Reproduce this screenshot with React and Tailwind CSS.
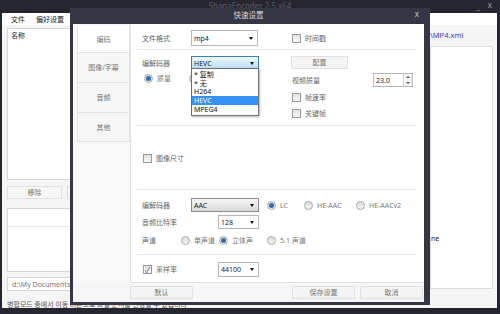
import React from 'react';

const FONT = "font-['Noto_Sans','Noto_Sans_CJK_SC',sans-serif]";

const Arrow = () => (
    <span className="w-0 h-0 border-x-[2.5px] border-x-transparent border-t-[3px] border-t-[#111]" />
);

const Select = ({ value, w, variant = 'plain' }) => {
    const look = {
        plain: 'border-[#b4b6bc] bg-white',
        focus: 'border-[#3c7fb1] bg-gradient-to-b from-[#eef7fd] to-[#b9dcf3]',
        gray: 'border-[#8c8c8c] bg-gradient-to-b from-[#f6f6f6] to-[#dadada]',
    }[variant];
    return (
        <div className={`flex items-center justify-between border ${look} ${w} h-full pl-[2px] pr-[4px] text-[#222]`}>
            <span>{value}</span>
            <Arrow />
        </div>
    );
};

const Check = ({ checked, label, className = '' }) => (
    <div className={`flex items-center gap-[4px] ${className}`}>
        <span className="w-[9px] h-[9px] border border-[#9a9a9a] bg-gradient-to-b from-[#e2e2e2] to-[#f7f7f7] flex items-center justify-center text-[8px] leading-none text-[#2a5fa8]">
            {checked ? '✓' : ''}
        </span>
        <span className="text-[#666]">{label}</span>
    </div>
);

const Radio = ({ checked, label, className = '' }) => (
    <div className={`flex items-center gap-[4px] ${className}`}>
        <span className="w-[9px] h-[9px] rounded-full border border-[#a8a8a8] bg-gradient-to-b from-[#dedede] to-[#f4f4f4] flex items-center justify-center">
            {checked && <span className="w-[5px] h-[5px] rounded-full bg-[#2d6db3]" />}
        </span>
        {label && <span className="text-[#777]">{label}</span>}
    </div>
);

const Sep = ({ className = '' }) => <div className={`h-px bg-[#e6e6e6] ${className}`} />;

const Btn = ({ label, className = '' }) => (
    <div className={`w-[63px] h-full border border-[#e0e0e0] bg-[#f4f4f4] flex items-center justify-center text-[#777] ${className}`}>
        {label}
    </div>
);

const Tab = ({ label, h, active }) => (
    <div className={`${h} flex items-center justify-center border-b border-[#e2e2e2] ${active ? 'bg-white' : 'bg-[#f6f6f6]'} text-[#777]`}>
        {label}
    </div>
);

const Dialog = () => (
    <div className="absolute left-[70px] top-[8px] w-[360px] h-[297px] bg-[#363744] flex flex-col pl-[3px] pr-[6px] pb-[3px]">
        <div className="h-[16px] flex items-center justify-center relative text-[#d8d8de] text-[7.5px]">
            <span>快速设置</span>
            <span className="absolute right-[5px] top-[2px] text-[#c8c8d0] text-[8px]">x</span>
        </div>
        <div className="flex-1 bg-[#f6f6f6] flex flex-col">
            <div className="flex h-[259px]">
                <div className="w-[57px] pl-[4px] pt-[2px] bg-[#f8f8f8]">
                    <div className="flex flex-col border-x border-[#e4e4e4]">
                        <Tab label="编码" h="h-[27px]" active />
                        <Tab label="图像/字幕" h="h-[30px]" />
                        <Tab label="音频" h="h-[30px]" />
                        <Tab label="其他" h="h-[29px]" />
                    </div>
                </div>
                <div className="flex-1 bg-white border-l border-b border-[#e0e0e0] pl-[6px] pr-[8px] pt-[6px] flex flex-col">
                    <div className="h-[16px] flex items-center">
                        <span className="w-[54px] pl-[5px] text-[#666]">文件格式</span>
                        <Select value="mp4" w="w-[67px]" />
                        <Check label="时间戳" className="ml-[34px]" />
                    </div>
                    <Sep className="mt-[3px]" />
                    <div className="mt-[6px] flex h-[63px]">
                        <div className="w-[154px] flex flex-col">
                            <div className="h-[14px] flex items-center relative">
                                <span className="w-[54px] pl-[5px] text-[#666]">编解码器</span>
                                <Select value="HEVC" w="w-[68px]" variant="focus" />
                                <div className="absolute left-[54px] top-[12px] w-[68px] h-[48px] bg-white border border-[#6f6f6f] shadow-[1px_1px_2px_rgba(0,0,0,0.3)] z-10 flex flex-col py-[1px] text-[#111] leading-none">
                                    <span className="h-[9px] flex items-center pl-[2px]">* 复制</span>
                                    <span className="h-[9px] flex items-center pl-[2px]">* 无</span>
                                    <span className="h-[9px] flex items-center pl-[2px]">H264</span>
                                    <span className="h-[9px] flex items-center pl-[2px] bg-[#3592f0] text-white">HEVC</span>
                                    <span className="h-[9px] flex items-center pl-[2px]">MPEG4</span>
                                </div>
                            </div>
                            <div className="mt-[2px] h-[12px] flex items-center pl-[7px]">
                                <Radio checked label="质量" />
                                <Radio className="ml-[18px]" />
                            </div>
                        </div>
                        <div className="flex-1 flex flex-col">
                            <div className="h-[13px] w-[57px] border border-[#e0e0e0] bg-[#f4f4f4] flex items-center justify-center text-[#777]">配置</div>
                            <div className="mt-[4px] h-[14px] flex items-center">
                                <span className="w-[82px] pl-[1px] text-[#666]">视频质量</span>
                                <div className="w-[40px] h-full border border-[#b4b6bc] bg-white flex items-center justify-between pl-[2px] text-[#222]">
                                    <span>23.0</span>
                                    <div className="w-[9px] h-full border-l border-[#d0d0d0] flex flex-col items-center justify-around bg-[#f3f3f3]">
                                        <span className="w-0 h-0 border-x-[2px] border-x-transparent border-b-[2px] border-b-[#555]" />
                                        <span className="w-0 h-0 border-x-[2px] border-x-transparent border-t-[2px] border-t-[#555]" />
                                    </div>
                                </div>
                            </div>
                            <div className="h-[20px] flex items-center pl-[1px]">
                                <Check label="帧速率" />
                            </div>
                            <div className="h-[12px] flex items-center pl-[1px]">
                                <Check label="关键帧" />
                            </div>
                        </div>
                    </div>
                    <Sep className="mt-[6px]" />
                    <div className="mt-[26px] h-[12px] flex items-center pl-[6px]">
                        <Check label="图像尺寸" />
                    </div>
                    <Sep className="mt-[25px]" />
                    <div className="mt-[8px] h-[14px] flex items-center">
                        <span className="w-[54px] pl-[5px] text-[#666]">编解码器</span>
                        <Select value="AAC" w="w-[68px]" variant="gray" />
                        <Radio checked label="LC" className="ml-[8px] w-[37px]" />
                        <Radio label="HE-AAC" className="w-[52px]" />
                        <Radio label="HE-AACv2" />
                    </div>
                    <div className="mt-[3px] h-[14px] flex items-center">
                        <span className="w-[81px] pl-[5px] text-[#666]">音频比特率</span>
                        <Select value="128" w="w-[41px]" />
                    </div>
                    <div className="mt-[5px] h-[12px] flex items-center">
                        <span className="w-[44px] pl-[5px] text-[#666]">声道</span>
                        <Radio label="单声道" className="w-[38px]" />
                        <Radio checked label="立体声" className="w-[48px]" />
                        <Radio label="5.1 声道" />
                    </div>
                    <Sep className="mt-[8px]" />
                    <div className="mt-[7px] h-[15px] flex items-center">
                        <Check checked label="采样率" className="w-[81px] pl-[6px]" />
                        <Select value="44100" w="w-[41px]" />
                    </div>
                </div>
            </div>
            <div className="mt-[3px] h-[13px] flex pl-[57px] pr-[1px] gap-[5px]">
                <Btn label="默认" />
                <Btn label="保存设置" className="ml-auto" />
                <Btn label="取消" />
            </div>
        </div>
    </div>
);

export default function App() {
    return (
        <div className={`relative w-[500px] h-[314px] overflow-hidden bg-[#25262f] text-[7px] leading-none ${FONT}`}>
            <div className="h-[13px] relative flex justify-center pt-[2px] text-[8px] text-[#5a5b66]">
                <span>ShanaEncoder 2.5 x64</span>
                <span className="absolute right-[20px] top-[2px] text-[#8a8a94]">_</span>
                <span className="absolute right-[8px] top-[1px] text-[#a0a0a8]">x</span>
            </div>
            <div className="ml-[2px] mr-[3px] h-[295px] bg-[#f5f5f5] flex flex-col">
                <div className="h-[14px] bg-white flex items-center gap-[11px] pl-[9px] text-[#222]">
                    <span>文件</span>
                    <span>偏好设置</span>
                </div>
                <div className="flex-1 flex justify-between">
                    <div className="w-[120px] pl-[5px] pt-[3px] flex flex-col">
                        <div className="h-[152px] w-[115px] bg-white border border-[#d6d6d6]">
                            <div className="h-[13px] flex items-center pl-[3px] text-[#222]">名称</div>
                        </div>
                        <div className="mt-[6px] h-[13px] flex gap-[5px]">
                            <div className="w-[55px] border border-[#e0e0e0] bg-[#f6f6f6] flex items-center justify-center text-[#777]">移除</div>
                            <div className="w-[55px] border border-[#e0e0e0] bg-[#f6f6f6]" />
                        </div>
                        <div className="mt-[9px] h-[64px] w-[115px] bg-white border border-[#d6d6d6]">
                            <div className="h-[18px] border-b border-[#e6e6e6]" />
                        </div>
                        <div className="mt-[5px] h-[14px] w-[115px] bg-white border border-[#d6d6d6] flex items-center pl-[4px] text-[#777]">
                            d:\My Documents\Videos
                        </div>
                        <div className="mt-[10px] whitespace-nowrap text-[#555] font-['Noto_Sans_CJK_KR',sans-serif]">
                            병합모드 중에서 이동 버튼으로 파일 순서를 변경할 수 있습니다
                        </div>
                    </div>
                    <div className="w-[67px] pt-[7px] flex flex-col">
                        <span className="text-[#3a3ad0] text-[7.5px]">\MP4.xml</span>
                        <div className="mt-[6px] h-[243px] w-[63px] bg-white border border-[#dcdcdc] flex flex-col">
                            <span className="mt-[188px] text-[#222]">ne</span>
                        </div>
                    </div>
                </div>
            </div>
            <Dialog />
        </div>
    );
}
